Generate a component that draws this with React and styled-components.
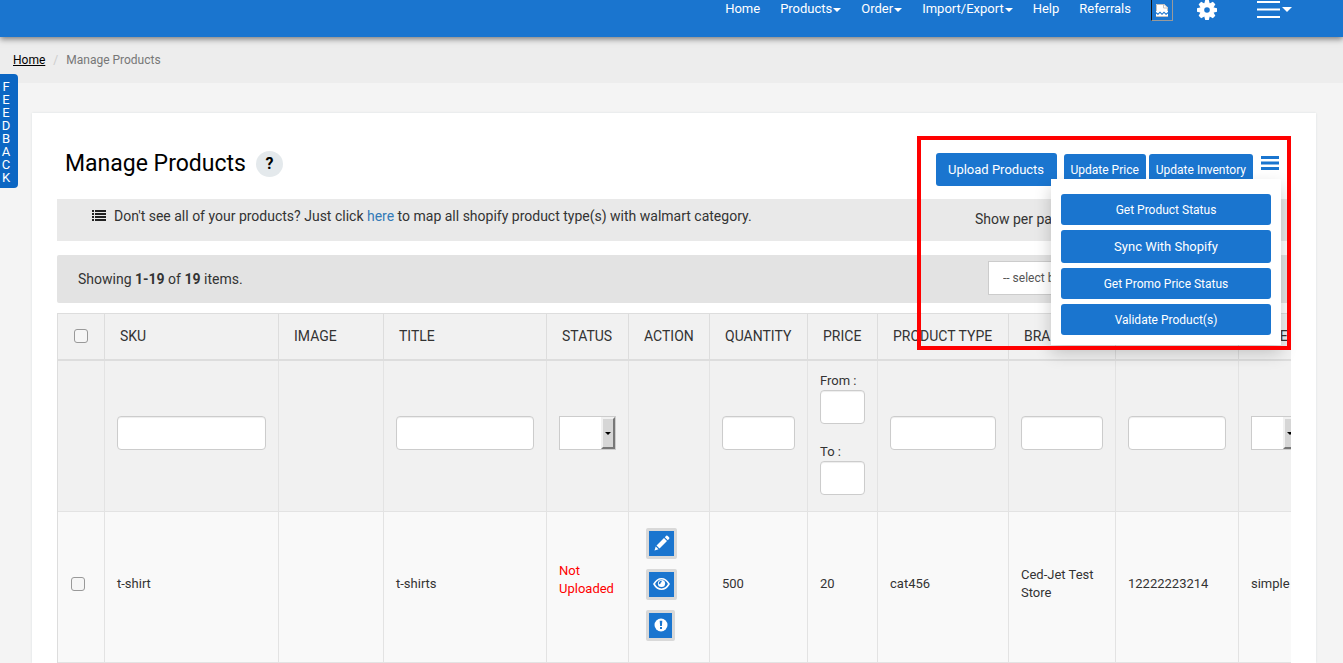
import React from "react";
import styled, { createGlobalStyle } from "styled-components";

const blue = "#1a75cf";
const ink = "#333";

const GlobalStyle = createGlobalStyle`
  *, *::before, *::after { box-sizing: border-box; }
  body {
    margin: 0;
    background: #f4f4f4;
    color: ${ink};
    font-family: Roboto, "Liberation Sans", sans-serif;
    font-size: 13px;
    line-height: 18px;
  }
  button, input, select { font: inherit; }
`;

const Page = styled.div`
  min-height: 100vh;
  display: flex;
  flex-direction: column;
  overflow: hidden;
`;

const TopBar = styled.header`
  position: relative;
  z-index: 1;
  display: flex;
  justify-content: flex-end;
  height: 37px;
  padding-right: 51px;
  background: ${blue};
  box-shadow: 0 2px 6px rgba(0, 0, 0, 0.5);
`;

const Nav = styled.nav`
  display: flex;
  align-items: flex-start;
  gap: 20px;
`;

const NavLink = styled.a`
  display: flex;
  align-items: center;
  gap: 1px;
  color: #fff;
  text-decoration: none;
`;

const NavTools = styled.div`
  display: flex;
  align-items: flex-start;
  margin-left: 20px;
`;

const Caret = styled.span`
  border: 4px solid transparent;
  border-top-color: currentColor;
  border-bottom: 0;
  margin-top: 2px;
`;

const BrokenImage = styled.span`
  display: flex;
  align-items: flex-end;
  justify-content: center;
  width: 22px;
  height: 21px;
  padding-bottom: 3px;
  border: 1px solid #9a9a9a;
  border-top: 0;
  border-left-color: #111;
`;

const ToolButton = styled.button`
  display: flex;
  align-items: flex-start;
  gap: 2px;
  margin-left: ${(p) => p.$gap}px;
  padding: 0;
  border: 0;
  background: none;
  color: #fff;
`;

const MenuCaret = styled(Caret)`
  margin-top: 7px;
  border-width: 5px 5px 0;
`;

const Crumbs = styled.nav`
  display: flex;
  gap: 8px;
  padding: 14px 13px;
  height: 46px;
  background: #ededed;
  color: #777;
  font-size: 12px;
`;

const CrumbHome = styled.a`
  color: #000;
`;

const CrumbSlash = styled.span`
  color: #ccc;
`;

const Feedback = styled.a`
  position: absolute;
  left: 0;
  top: 74px;
  z-index: 2;
  width: 18px;
  padding: 6px 7px 4px 1px;
  border-radius: 0 4px 4px 0;
  background: #0b66c3;
  color: #fff;
  line-height: 13px;
  text-align: center;
  text-decoration: none;
  word-break: break-all;
`;

const Card = styled.main`
  position: relative;
  flex: 1;
  margin: 30px 27px 0 32px;
  padding: 23px 25px 0;
  background: #fff;
  box-shadow: 0 0 2px rgba(40, 80, 110, 0.12);
`;

const TitleRow = styled.div`
  display: flex;
  align-items: flex-start;
  justify-content: space-between;
  height: 63px;
  padding: 14px 8px 0;
`;

const TitleGroup = styled.div`
  display: flex;
  align-items: center;
  gap: 10px;
`;

const Title = styled.h1`
  margin: 0;
  color: #000;
  font-size: 23px;
  font-weight: 400;
  line-height: 27px;
`;

const HelpLink = styled.a`
  display: flex;
  align-items: center;
  justify-content: center;
  width: 27px;
  height: 26px;
  border-radius: 50%;
  background: #e4e9ec;
  color: #000;
  font-size: 16px;
  font-weight: 700;
  text-decoration: none;
`;

const Actions = styled.div`
  position: relative;
  display: flex;
  align-items: flex-start;
  gap: 3px;
  padding: 3px 4px 0 0;
`;

const Button = styled.button`
  height: ${(p) => (p.$tall ? 33 : 31)}px;
  padding: 0 7px;
  border: 0;
  border-radius: 3px;
  background: ${blue};
  color: #fff;
  font-size: ${(p) => (p.$tall ? 13 : 12)}px;
`;

const UploadButton = styled(Button)`
  width: 121px;
  margin-right: 4px;
`;

const ActionButton = styled(Button)`
  margin-top: 1px;
`;

const MoreButton = styled.button`
  margin: 3px 0 0 5px;
  padding: 0;
  border: 0;
  background: none;
  color: ${blue};
  line-height: 0;
`;

const Dropdown = styled.div`
  position: absolute;
  top: 29px;
  right: 2px;
  z-index: 3;
  display: flex;
  flex-direction: column;
  gap: 5px;
  width: 230px;
  padding: 15px 10px 10px;
  background: #fff;
  box-shadow: 0 8px 16px rgba(0, 0, 0, 0.2);
`;

const Highlight = styled.div`
  position: absolute;
  top: 23px;
  right: 25px;
  z-index: 4;
  width: 374px;
  height: 214px;
  border: 4px solid #f00;
  pointer-events: none;
`;

const Notice = styled.div`
  display: flex;
  justify-content: space-between;
  height: 42px;
  padding: 8px 195px 0 35px;
  background: #e9e9e9;
  font-size: 14px;
  white-space: nowrap;
`;

const NoticeText = styled.span`
  display: flex;
  align-items: flex-start;
  gap: 8px;

  svg { margin-top: 3px; }
`;

const NoticeLink = styled.a`
  color: #337ab7;
  text-decoration: none;
`;

const PerPage = styled.label`
  width: 121px;
  padding-top: 3px;
`;

const Summary = styled.div`
  display: flex;
  align-items: flex-start;
  justify-content: space-between;
  height: 48px;
  margin: 14px 0 10px;
  padding: 6px 10px 0 21px;
  border-radius: 2px;
  background: #e3e3e3;
  font-size: 14px;
  line-height: 36px;
`;

const BulkSelect = styled.select`
  appearance: none;
  width: 293px;
  height: 34px;
  padding: 0 14px;
  border: 1px solid #ccc;
  border-radius: 0;
  background: #fff;
  color: #555;
  font-size: 12px;
  line-height: 18px;
`;

const TableWrap = styled.div`
  overflow: hidden;
`;

const Table = styled.table`
  width: 1254px;
  table-layout: fixed;
  border-collapse: separate;
  border-spacing: 0;
  border: solid #ddd;
  border-width: 1px 0 0 1px;
`;

const Th = styled.th`
  height: 47px;
  padding: 0 ${(p) => (p.$center ? 0 : 15)}px 2px;
  border: solid #ddd;
  border-width: 0 1px 2px 0;
  background: #f1f1f1;
  font-size: 14px;
  font-weight: 400;
  text-align: ${(p) => (p.$center ? "center" : "left")};
  white-space: nowrap;
`;

const Td = styled.td`
  height: 151px;
  padding: 0 12px 6px;
  border: solid #e3e3e3;
  border-width: 0 1px 1px 0;
  background: ${(p) => (p.$filter ? "#f1f1f1" : "#f9f9f9")};
`;

const ActionTd = styled(Td)`
  padding: 0 17px 6px;
`;

const StatusLabel = styled.p`
  margin: 0 0 8px;
  color: #f00;
`;

const CheckBox = styled.input`
  appearance: none;
  display: block;
  width: 14px;
  height: 14px;
  margin: 0 auto;
  border: 1px solid #999;
  border-radius: 3px;
  background: #f6f6f6;
`;

const RowCheckBox = styled(CheckBox)`
  margin: 0 1px;
`;

const FilterInput = styled.input`
  display: block;
  width: 100%;
  height: 34px;
  padding: 6px;
  border: 1px solid #ccc;
  border-radius: 4px;
  background: #fff;
  box-shadow: inset 0 1px 1px rgba(0, 0, 0, 0.075);
`;

const SelectBox = styled.div`
  position: relative;
  height: 34px;
`;

const FilterSelect = styled.select`
  appearance: none;
  width: 100%;
  height: 100%;
  border: 1px solid #ccc;
  border-radius: 0;
  background: #fff;
`;

const SelectArrow = styled.span`
  position: absolute;
  top: 1px;
  right: 1px;
  bottom: 1px;
  display: flex;
  align-items: center;
  justify-content: center;
  width: 14px;
  border: 2px solid #777;
  border-top-color: #f1f1f1;
  border-left-color: #f1f1f1;
  background: #d6d6d6;
  color: #000;
  pointer-events: none;
`;

const SmallCaret = styled.span`
  border: 3px solid transparent;
  border-top-color: currentColor;
  border-bottom: 0;
`;

const PriceRange = styled.div`
  display: flex;
  flex-direction: column;
  gap: 19px;
`;

const IconStack = styled.div`
  display: flex;
  flex-direction: column;
  align-items: flex-start;
  gap: 10px;
`;

const IconButton = styled.button`
  display: flex;
  align-items: center;
  justify-content: center;
  width: ${(p) => (p.$narrow ? 29 : 31)}px;
  height: 31px;
  padding: 0;
  border: 3px solid #d9d9d9;
  border-radius: 2px;
  background: ${blue};
  color: #fff;
`;

const GearIcon = () => (
  <svg width="20" height="20" viewBox="-10 -10 20 20" aria-hidden="true">
    {[0, 45, 90, 135].map((a) => (
      <path key={a} d="M-2.6-7 L-1.8-10 H1.8 L2.6-7 V7 L1.8 10 H-1.8 L-2.6 7Z" fill="#fff" transform={`rotate(${a})`} />
    ))}
    <circle r="7.2" fill="#fff" />
    <circle r="2.8" fill={blue} />
  </svg>
);

const BrokenIcon = () => (
  <svg width="12" height="13" viewBox="0 0 12 13" aria-hidden="true">
    <path d="M0 0H8L12 3.500V8L10 9.500L8 7.500L6 9.500L4 7.500L2 9.500L0 8Z" fill="#fff" />
    <path d="M.5 7V.5H8L11.500 3.500V7M7.500.5V4H11.500" fill="none" stroke="#c4c0bc" />
    <path d="M0 9.500L2 11L4 9L6 11L8 9L10 11L12 9.500V13H0Z" fill="#fff" />
    <path d="M0 12.500H12" stroke="#c4c0bc" />
  </svg>
);

const NavMenuIcon = () => (
  <svg width="23" height="18" viewBox="0 0 23 18" aria-hidden="true">
    <path d="M0 1h23v2H0zM0 8.500h23v2H0zM0 16h23v2H0z" fill="currentColor" />
  </svg>
);

const MoreIcon = () => (
  <svg width="18" height="14" viewBox="0 0 18 14" aria-hidden="true">
    <path d="M0 0h18v3H0zM0 5.500h18v3H0zM0 11h18v3H0z" fill="currentColor" />
  </svg>
);

const ListIcon = () => (
  <svg width="14" height="11" viewBox="0 0 14 11" aria-hidden="true">
    <path d="M0 0h2v2H0zM3 0h11v2H3zM0 3h2v2H0zM3 3h11v2H3zM0 6h2v2H0zM3 6h11v2H3zM0 9h2v2H0zM3 9h11v2H3z" fill="#222" />
  </svg>
);

const PencilIcon = () => (
  <svg width="16" height="16" viewBox="0 0 16 16" fill="currentColor" aria-hidden="true">
    <path d="M.5 15.500L1.700 11.400L4.600 14.300ZM2.500 10.500L10 3L13 6L5.500 13.500ZM10.800 2.200L12.200.8Q13 .2 13.800 1L15 2.200Q15.800 3 15.200 3.800L13.800 5.200Z" />
  </svg>
);

const EyeIcon = () => (
  <svg width="17" height="14" viewBox="0 0 17 14" aria-hidden="true">
    <path d="M1 7Q4 1.700 8.500 1.700T16 7Q13 12.300 8.500 12.300T1 7Z" fill="none" stroke="#fff" strokeWidth="1.600" />
    <circle cx="8.500" cy="6.500" r="3.600" fill="#fff" />
    <path d="M8.600 4.200Q6.300 4.500 6.600 7.200" fill="none" stroke={blue} strokeWidth="1.500" />
  </svg>
);

const AlertIcon = () => (
  <svg width="14" height="14" viewBox="0 0 14 14" aria-hidden="true">
    <circle cx="7" cy="7" r="6.500" fill="#fff" />
    <path d="M5.700 2.800H8.300L7.900 8H6.100ZM6 9H8V11H6Z" fill={blue} />
  </svg>
);

const navItems = [
  { label: "Home" },
  { label: "Products", menu: true },
  { label: "Order", menu: true },
  { label: "Import/Export", menu: true },
  { label: "Help" },
  { label: "Referrals" },
];

const columns = [
  { name: "SKU", width: 174, filter: "text" },
  { name: "IMAGE", width: 105 },
  { name: "TITLE", width: 163, filter: "text" },
  { name: "STATUS", width: 82, filter: "select" },
  { name: "ACTION", width: 81 },
  { name: "QUANTITY", width: 98, filter: "text" },
  { name: "PRICE", width: 70, filter: "range" },
  { name: "PRODUCT TYPE", width: 131, filter: "text" },
  { name: "BRAND", width: 107, filter: "text" },
  { name: "BARCODE", width: 123, filter: "text" },
  { name: "TYPE", width: 72, filter: "select" },
];

const ColumnFilter = ({ column }) => {
  if (column.filter === "text") return <FilterInput aria-label={column.name} />;
  if (column.filter === "select")
    return (
      <SelectBox>
        <FilterSelect aria-label={column.name} />
        <SelectArrow><SmallCaret /></SelectArrow>
      </SelectBox>
    );
  if (column.filter === "range")
    return (
      <PriceRange>
        <label>From :<FilterInput /></label>
        <label>To :<FilterInput /></label>
      </PriceRange>
    );
  return null;
};

export default function App() {
  return (
    <Page>
      <GlobalStyle />
      <TopBar>
        <Nav>
          {navItems.map((item) => (
            <NavLink href="#" key={item.label}>
              {item.label}
              {item.menu && <Caret />}
            </NavLink>
          ))}
        </Nav>
        <NavTools>
          <BrokenImage><BrokenIcon /></BrokenImage>
          <ToolButton $gap={24} aria-label="Settings"><GearIcon /></ToolButton>
          <ToolButton $gap={40} aria-label="Account menu"><NavMenuIcon /><MenuCaret /></ToolButton>
        </NavTools>
      </TopBar>
      <Crumbs aria-label="Breadcrumb">
        <CrumbHome href="#">Home</CrumbHome>
        <CrumbSlash>/</CrumbSlash>
        <span>Manage Products</span>
      </Crumbs>
      <Feedback href="#">FEEDBACK</Feedback>
      <Card>
        <TitleRow>
          <TitleGroup>
            <Title>Manage Products</Title>
            <HelpLink href="#">?</HelpLink>
          </TitleGroup>
          <Actions>
            <UploadButton $tall>Upload Products</UploadButton>
            <ActionButton>Update Price</ActionButton>
            <ActionButton>Update Inventory</ActionButton>
            <MoreButton aria-label="More actions"><MoreIcon /></MoreButton>
            <Dropdown>
              <Button>Get Product Status</Button>
              <Button $tall>Sync With Shopify</Button>
              <Button>Get Promo Price Status</Button>
              <Button>Validate Product(s)</Button>
            </Dropdown>
          </Actions>
        </TitleRow>
        <Highlight />
        <Notice>
          <NoticeText>
            <ListIcon />
            <span>
              Don't see all of your products? Just click <NoticeLink href="#">here</NoticeLink> to map all shopify product type(s) with walmart category.
            </span>
          </NoticeText>
          <PerPage>Show per page</PerPage>
        </Notice>
        <Summary>
          <span>Showing <b>1-19</b> of <b>19</b> items.</span>
          <BulkSelect aria-label="Bulk action">
            <option>-- select bulk action --</option>
          </BulkSelect>
        </Summary>
        <TableWrap>
          <Table>
            <colgroup>
              <col width="47" />
              {columns.map((c) => <col key={c.name} width={c.width} />)}
            </colgroup>
            <thead>
              <tr>
                <Th $center><CheckBox type="checkbox" aria-label="Select all" /></Th>
                {columns.map((c) => <Th key={c.name}>{c.name}</Th>)}
              </tr>
            </thead>
            <tbody>
              <tr>
                <Td $filter />
                {columns.map((c) => (
                  <Td $filter key={c.name}><ColumnFilter column={c} /></Td>
                ))}
              </tr>
              <tr>
                <Td><RowCheckBox type="checkbox" aria-label="Select t-shirt" /></Td>
                <Td>t-shirt</Td>
                <Td />
                <Td>t-shirts</Td>
                <Td><StatusLabel>Not Uploaded</StatusLabel></Td>
                <ActionTd>
                  <IconStack>
                    <IconButton aria-label="Edit"><PencilIcon /></IconButton>
                    <IconButton aria-label="View"><EyeIcon /></IconButton>
                    <IconButton $narrow aria-label="Errors"><AlertIcon /></IconButton>
                  </IconStack>
                </ActionTd>
                <Td>500</Td>
                <Td>20</Td>
                <Td>cat456</Td>
                <Td>Ced-Jet Test Store</Td>
                <Td>12222223214</Td>
                <Td>simple</Td>
              </tr>
            </tbody>
          </Table>
        </TableWrap>
      </Card>
    </Page>
  );
}
